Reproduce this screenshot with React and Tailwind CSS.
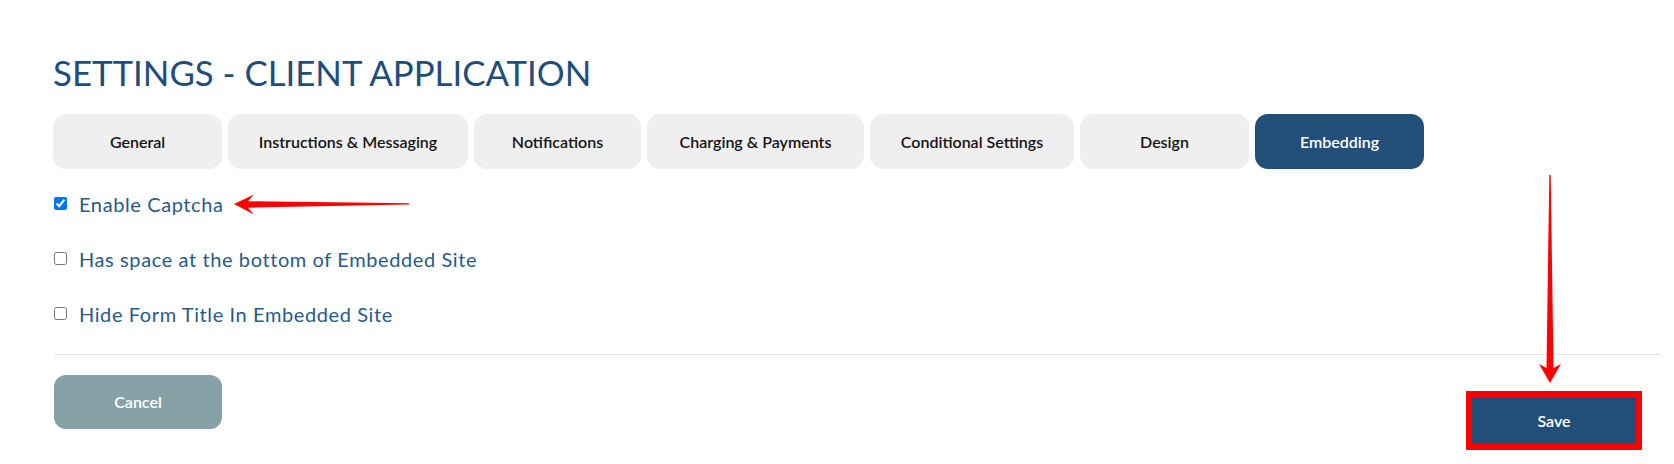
import React from 'react';

const font = { fontFamily: 'Lato, "Noto Sans", sans-serif' };

const tabs = [
  { label: 'General', w: 'w-[169px]' },
  { label: 'Instructions & Messaging', w: 'w-[240px]' },
  { label: 'Notifications', w: 'w-[167px]' },
  { label: 'Charging & Payments', w: 'w-[217px]' },
  { label: 'Conditional Settings', w: 'w-[204px]' },
  { label: 'Design', w: 'w-[169px]' },
  { label: 'Embedding', w: 'w-[169px]', active: true },
];

const options = [
  { label: 'Enable Captcha', checked: true },
  { label: 'Has space at the bottom of Embedded Site', checked: false },
  { label: 'Hide Form Title In Embedded Site', checked: false },
];

const App = () => {
  return (
    <div
      className="relative w-[1674px] h-[464px] bg-white pl-[53px] pr-[13px] pt-[53px] overflow-hidden"
      style={font}
    >
      {/* Title */}
      <h1 className="text-[34.8px] leading-[40px] text-[#1f4e79] font-normal">
        SETTINGS - CLIENT APPLICATION
      </h1>

      {/* Tabs */}
      <div className="flex gap-[6px] mt-[21px]">
        {tabs.map((t) => (
          <div
            key={t.label}
            className={`${t.w} h-[55px] rounded-[13px] flex items-center justify-center text-[16px] font-semibold ${
              t.active ? 'bg-[#224f77] text-white' : 'bg-[#efefef] text-[#141414]'
            }`}
          >
            {t.label}
          </div>
        ))}
      </div>

      {/* Options */}
      <div className="mt-[7px] flex flex-col">
        {options.map((o) => (
          <label key={o.label} className="h-[55px] flex items-center gap-[12px] pl-[1px]">
            <input type="checkbox" defaultChecked={o.checked} className="w-[13px] h-[13px]" />
            <span className="text-[20px] tracking-[0.6px] text-[#2a5a86]">{o.label}</span>
          </label>
        ))}
      </div>

      <div className="mt-[13px] border-t border-[#e3e3e3]" />

      {/* Footer buttons */}
      <div className="flex items-start justify-between">
        <button className="mt-[20px] ml-[1px] w-[168px] h-[54px] rounded-[12px] bg-[#86a2a7] text-white text-[16px] font-semibold">
          Cancel
        </button>
        <div className="mt-[36px] mr-[19px] border-[6px] border-[#ff0000]">
          <button className="w-[164px] h-[47px] bg-[#224f77] text-white text-[16px] font-semibold">
            Save
          </button>
        </div>
      </div>

      {/* Annotation arrows */}
      <svg className="absolute inset-0 w-full h-full pointer-events-none" viewBox="0 0 1674 464">
        <polygon
          fill="#ff0000"
          points="234,204 254,194.5 248,201.3 409,203.3 409,204.5 248,207.7 254,214.5"
        />
        <polygon
          fill="#ff0000"
          points="1550,383 1539,364 1546.5,368 1549.3,175 1550.7,175 1553.5,368 1561,364"
        />
      </svg>
    </div>
  );
};

export default App;
